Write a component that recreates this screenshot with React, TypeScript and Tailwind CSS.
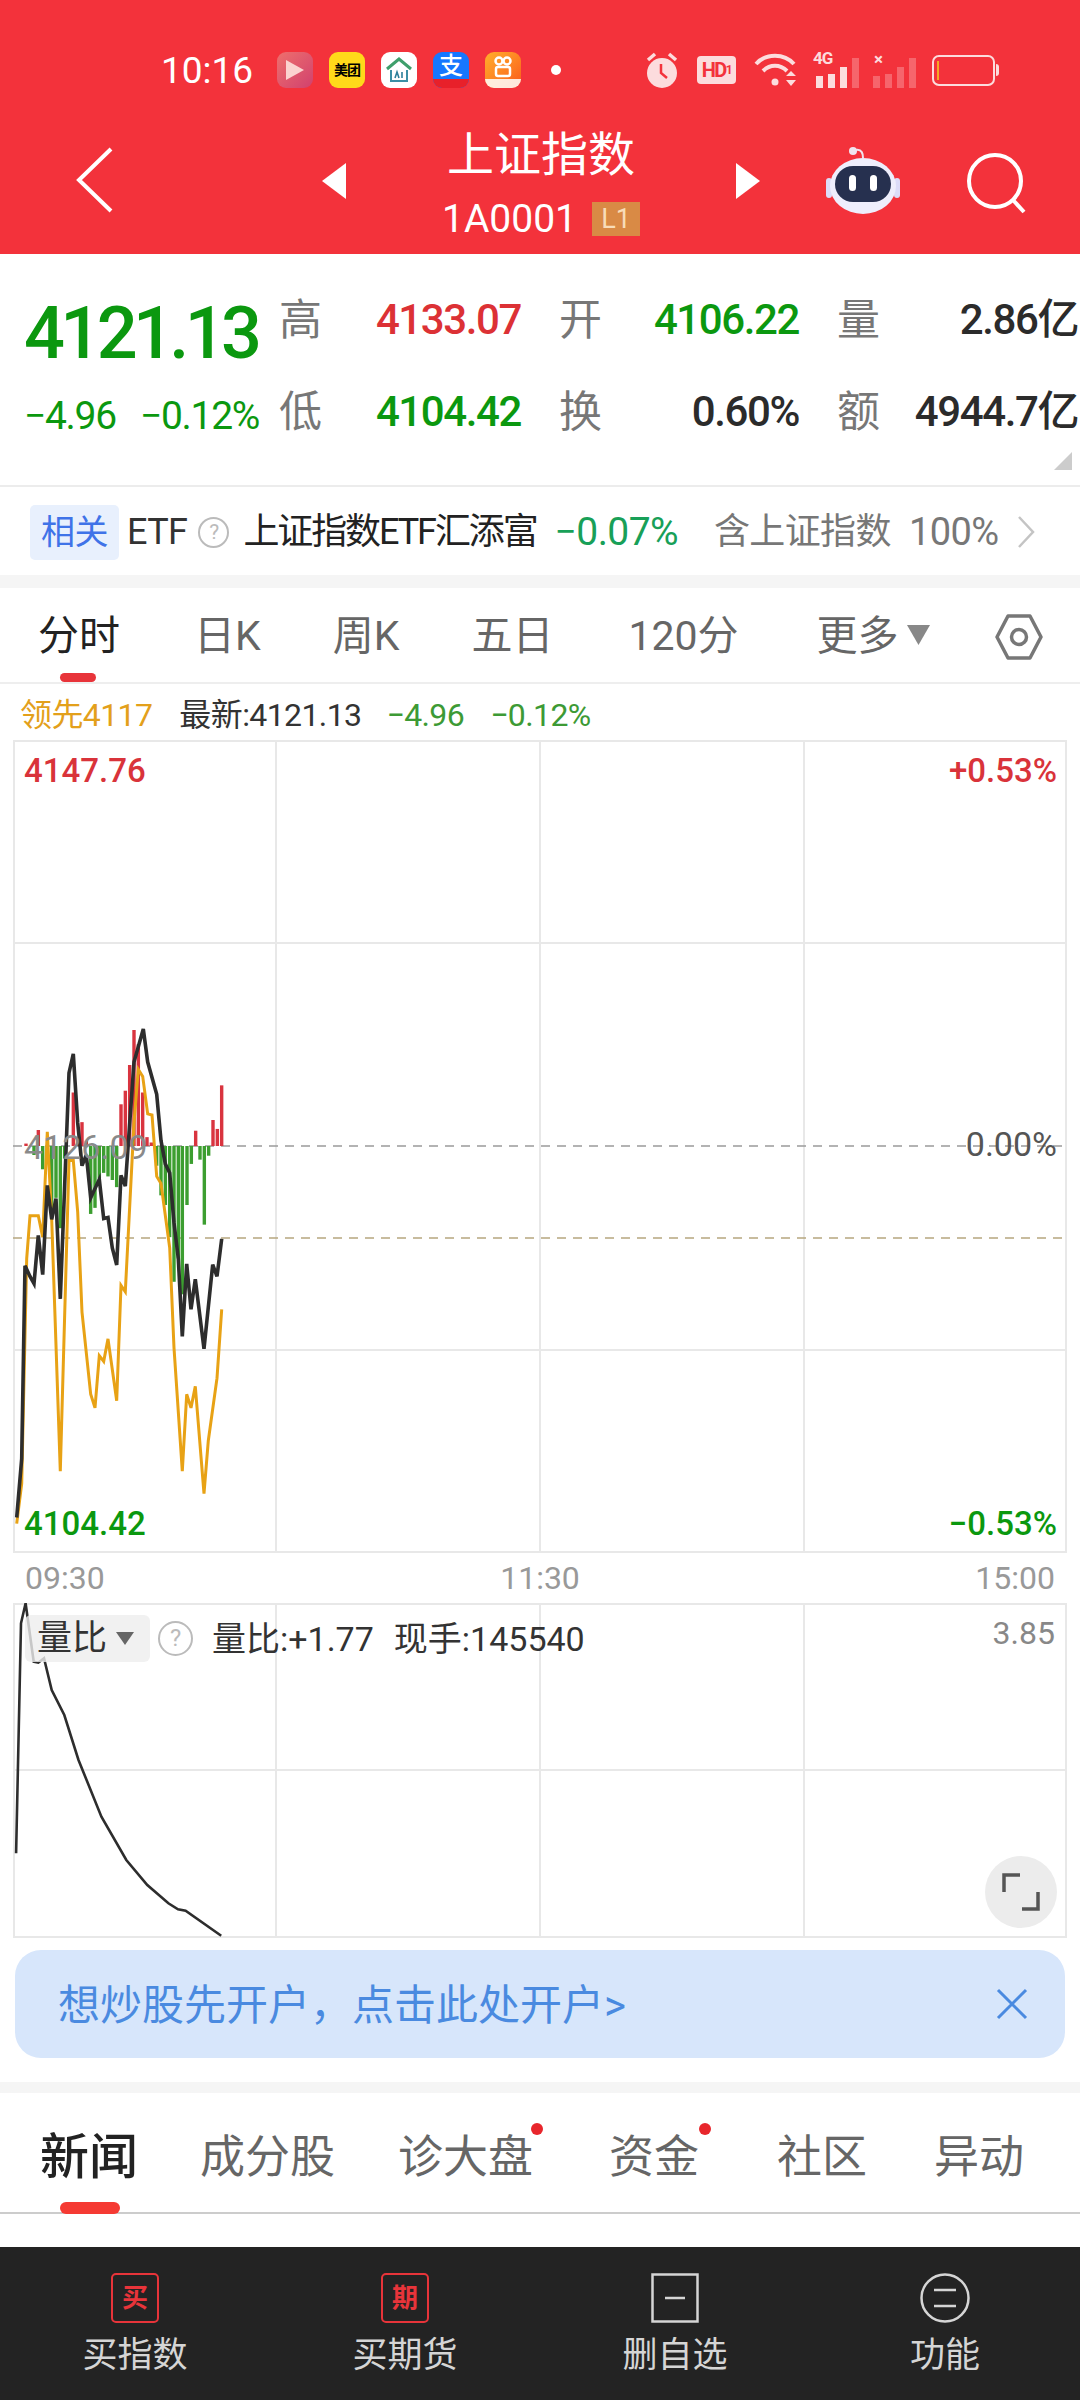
const RED = "#f3323b";

// traced from the reference: x = zx / 3, y = 980 + zy / 2.8
const toPoints = (pts: number[][]) =>
  pts.map(([x, y]) => `${(x / 3).toFixed(1)},${(980 + y / 2.8).toFixed(1)}`).join(" ");

const PRICE = [
  [50, 1505], [65, 1340], [75, 800], [90, 830], [102, 850], [115, 715], [128, 825], [142, 575], [155, 670], [168, 612],
  [181, 893], [207, 260], [220, 207], [233, 400], [246, 520], [259, 490], [272, 610], [298, 558], [311, 668], [324, 665],
  [337, 750], [350, 798], [363, 547], [376, 577], [402, 230], [430, 137], [443, 230], [470, 320], [483, 450], [496, 515],
  [509, 540], [522, 680], [535, 780], [547, 998], [560, 795], [573, 922], [586, 838], [612, 1033], [638, 797], [651, 830],
  [665, 725],
];

const AVG = [
  [50, 1522], [65, 1410], [80, 780], [90, 660], [115, 660], [128, 720], [142, 425], [155, 670], [181, 1375], [207, 505],
  [220, 505], [233, 650], [246, 930], [272, 1160], [285, 1198], [298, 1052], [311, 1068], [324, 1005], [350, 1178], [363, 855],
  [376, 873], [402, 400], [415, 250], [428, 270], [443, 375], [456, 378], [470, 550], [483, 570], [509, 750], [522, 1030],
  [547, 1375], [560, 1160], [573, 1198], [586, 1138], [612, 1438], [625, 1290], [651, 1115], [665, 922],
];

const BARS = [
  [78, 458], [102, 490], [115, 420], [128, 530], [142, 490], [155, 640], [168, 610], [181, 695], [194, 500], [220, 315], [233, 440],
  [246, 398], [259, 450], [272, 655], [285, 638], [298, 555], [311, 540], [324, 550], [337, 560], [350, 580], [363, 348], [376, 310],
  [389, 238], [402, 140], [415, 180], [428, 315], [441, 440], [454, 455], [470, 520], [483, 603], [496, 630], [509, 720], [522, 845],
  [535, 780], [547, 880], [561, 630], [574, 515], [587, 422], [600, 503], [613, 685], [626, 492], [639, 392], [652, 417], [665, 295],
];

const RATIO = [
  [42, 880], [55, 190], [67, 130], [88, 305], [100, 308], [115, 295], [135, 390], [168, 465], [205, 600], [265, 770],
  [330, 900], [385, 975], [440, 1030], [465, 1048], [485, 1052], [578, 1127],
];

function AppIcon({ className, children }: { className: string; children?: React.ReactNode }) {
  return (
    <div className={`flex h-9 w-9 items-center justify-center overflow-hidden rounded-[9px] ${className}`}>{children}</div>
  );
}

function StatusBar() {
  return (
    <div className="flex h-[140px] items-center pl-[161px] text-white">
      <span className="w-[116px] text-[37px] leading-none">10:16</span>
      <div className="flex gap-4">
        <AppIcon className="bg-gradient-to-br from-[#ee6f6c] to-[#d1406e]">
          <svg width="22" height="24" viewBox="0 0 22 24">
            <path d="M2 2 L20 12 L2 22 Z" fill="#fbd3d0" />
          </svg>
        </AppIcon>
        <AppIcon className="bg-[#ffd91a] text-[14px] font-bold tracking-[-1px] text-black">美团</AppIcon>
        <AppIcon className="bg-white">
          <svg width="30" height="30" viewBox="0 0 30 30" fill="none">
            <path d="M3 14 L15 4 L27 14" stroke="#3f9f6b" strokeWidth="3" />
            <path d="M7 15 V26 H23 V15" stroke="#3b8fa5" strokeWidth="2" />
            <path d="M11 23 L13 17 L15 23 M18 17 V23" stroke="#2e7f9a" strokeWidth="1.6" />
          </svg>
        </AppIcon>
        <AppIcon className="relative bg-[#1677ff] text-[24px] font-medium leading-none text-white">
          <span className="-mt-[8px]">支</span>
          <span className="absolute inset-x-0 bottom-0 h-[9px] bg-[#e8202a]" />
        </AppIcon>
        <AppIcon className="relative bg-gradient-to-br from-[#ffae2b] to-[#f9561c]">
          <svg className="-mt-[6px]" width="22" height="24" viewBox="0 0 22 24" fill="none" stroke="white" strokeWidth="2.5">
            <circle cx="7" cy="6" r="3.5" />
            <circle cx="15" cy="6" r="3.5" />
            <rect x="4" y="12" width="14" height="9" rx="2" />
          </svg>
          <span className="absolute inset-x-0 bottom-0 h-[9px] bg-white/85" />
        </AppIcon>
      </div>
      <span className="ml-[30px] h-[10px] w-[10px] rounded-full bg-white" />
      <div className="ml-[84px] flex items-center text-[#fcdcdd]">
        <svg width="34" height="38" viewBox="0 0 34 38" fill="none">
          <circle cx="17" cy="22" r="15" fill="#fcdcdd" />
          <path d="M16 13 V22 L22 27" stroke={RED} strokeWidth="2.5" />
          <path d="M3 9 L10 3 M31 9 L24 3" stroke="#fcdcdd" strokeWidth="3.5" />
        </svg>
        <span className="ml-[18px] flex h-[28px] w-[39px] items-center justify-center rounded-[4px] bg-[#fcdcdd] text-[20px] font-bold leading-none tracking-[-1.5px] text-[#f3323b]">
          HD<span className="text-[12px]">1</span>
        </span>
        <svg className="ml-[18px]" width="46" height="36" viewBox="0 0 46 36" fill="none" stroke="#fcdcdd" strokeWidth="4">
          <path d="M2 12 C12 1 30 1 40 12" />
          <path d="M9 19 C16 12 26 12 33 19" />
          <circle cx="21" cy="30" r="3.5" fill="#fcdcdd" stroke="none" />
          <path d="M32 24 L37 19 L42 24 Z M32 28 L42 28 L37 34 Z" fill="#fcdcdd" stroke="none" />
        </svg>
        <div className="relative ml-[13px] h-[36px] w-[46px]">
          <span className="absolute left-0 top-[-6px] text-[17px] font-bold tracking-[-1px]">4G</span>
          <div className="absolute inset-0 flex items-end gap-[5px]">
            <span className="ml-[3px] h-[12px] w-[7px] bg-[#fcdcdd]" />
            <span className="h-[14px] w-[7px] bg-[#fcdcdd]" />
            <span className="h-[21px] w-[7px] bg-[#fcdcdd]" />
            <span className="h-[30px] w-[7px] bg-white/25" />
          </div>
        </div>
        <div className="relative ml-[14px] h-[36px] w-[44px]">
          <span className="absolute left-[1px] top-[-5px] text-[17px] font-bold leading-[24px]">×</span>
          <div className="absolute inset-0 flex items-end gap-[5px]">
            <span className="h-[12px] w-[7px] bg-white/25" />
            <span className="h-[14px] w-[7px] bg-white/25" />
            <span className="h-[21px] w-[7px] bg-white/25" />
            <span className="h-[30px] w-[7px] bg-white/25" />
          </div>
        </div>
        <div className="ml-[15px] flex items-center">
          <div className="h-[31px] w-[63px] rounded-[7px] border-2 border-[#fcdcdd] pl-[3px] pt-[4px]">
            <div className="h-[19px] w-[2px] bg-[#f6a623]" />
          </div>
          <span className="ml-[1px] h-[12px] w-[3px] rounded-r bg-[#fcdcdd]" />
        </div>
      </div>
    </div>
  );
}

function NavBar() {
  return (
    <div className="flex h-[114px] items-start pl-[76px] text-white">
      <svg className="mt-[7px]" width="38" height="66" viewBox="0 0 38 66" fill="none">
        <path d="M35 2 L3 33 L35 64" stroke="white" strokeWidth="4" />
      </svg>
      <svg className="ml-[208px] mt-[23px]" width="24" height="36" viewBox="0 0 24 36">
        <path d="M24 0 V36 L0 18 Z" fill="white" />
      </svg>
      <div className="-mt-[12px] flex w-[390px] flex-col items-center">
        <span className="text-[47px] leading-[54px]">上证指数</span>
        <div className="mt-[15px] flex items-center gap-[15px]">
          <span className="text-[39px] leading-[44px]">1A0001</span>
          <span className="flex h-[34px] w-[48px] items-center justify-center bg-[#d98a45] text-[27px] text-[#f8dcb8]">L1</span>
        </div>
      </div>
      <svg className="mt-[23px]" width="24" height="36" viewBox="0 0 24 36">
        <path d="M0 0 V36 L24 18 Z" fill="white" />
      </svg>
      <svg className="ml-[66px] mt-[6px]" width="74" height="68" viewBox="0 0 74 68" fill="none">
        <circle cx="27" cy="5" r="4" fill="#f0e4ee" />
        <path d="M30 4 C36 3 37 8 37 12" stroke="#f0e4ee" strokeWidth="2" />
        <rect x="0" y="32" width="6" height="20" rx="3" fill="#dcdcf8" />
        <rect x="68" y="32" width="6" height="20" rx="3" fill="#dcdcf8" />
        <ellipse cx="37" cy="40" rx="33" ry="28" fill="#eeeefc" />
        <rect x="9" y="20" width="56" height="36" rx="18" fill="#26304f" />
        <rect x="23" y="29" width="7" height="16" rx="3.5" fill="white" />
        <rect x="44" y="29" width="7" height="16" rx="3.5" fill="white" />
      </svg>
      <svg className="ml-[66px] mt-[12px]" width="62" height="62" viewBox="0 0 62 62" fill="none" stroke="white" strokeWidth="4">
        <circle cx="29" cy="29" r="26" />
        <path d="M47 48 L58 60" />
      </svg>
    </div>
  );
}

function Stat({ label, value, color }: { label: string; value: string; color: string }) {
  return (
    <div className="flex items-center justify-between">
      <span className="text-[43px] leading-none text-[#777777]">{label}</span>
      <span className={`text-[42px] font-medium leading-none tracking-[-1.4px] ${color}`}>{value}</span>
    </div>
  );
}

function Quote() {
  return (
    <div className="relative flex h-[231px] pl-[24px] pt-[40px]">
      <div className="w-[256px]">
        <div className="mt-[4px] text-[72px] font-medium leading-[72px] tracking-[-4.6px] text-[#0b980f]">4121.13</div>
        <div className="mt-[24px] flex text-[39px] leading-[44px] tracking-[-1.3px] text-[#0b980f]">
          <span className="w-[116px]">−4.96</span>
          <span>−0.12%</span>
        </div>
      </div>
      <div className="-ml-[1px] grid grid-cols-[242px_240px_241px] grid-rows-[92px_92px] gap-x-[38px] [&>*]:h-[52px]">
        <Stat label="高" value="4133.07" color="text-[#dc3135]" />
        <Stat label="开" value="4106.22" color="text-[#0b980f]" />
        <Stat label="量" value="2.86亿" color="text-[#2b2b2b]" />
        <Stat label="低" value="4104.42" color="text-[#0b980f]" />
        <Stat label="换" value="0.60%" color="text-[#2b2b2b]" />
        <Stat label="额" value="4944.7亿" color="text-[#2b2b2b]" />
      </div>
      <svg className="absolute bottom-[15px] right-[8px]" width="18" height="18" viewBox="0 0 18 18">
        <path d="M18 0 V18 H0 Z" fill="#cccccc" />
      </svg>
    </div>
  );
}

function QuestionMark({ size }: { size: number }) {
  return (
    <span
      className="flex items-center justify-center rounded-full border-2 border-[#bbbbbb] text-[#bbbbbb]"
      style={{ width: size, height: size, fontSize: size * 0.68 }}
    >
      ?
    </span>
  );
}

function RelatedRow() {
  return (
    <div className="flex h-[90px] items-center border-t-2 border-[#ececec] pl-[30px] pt-[2px] text-[36px] leading-none tracking-[-0.6px]">
      <span className="flex h-[55px] w-[89px] items-center justify-center rounded-[5px] bg-[#e8f0fd] text-[34px] text-[#3f73e8]">相关</span>
      <span className="ml-[8px] text-[#333333]">ETF</span>
      <span className="ml-[11px]">
        <QuestionMark size={31} />
      </span>
      <span className="ml-[14px] text-[#222222] tracking-[-2.1px]">上证指数ETF汇添富</span>
      <span className="ml-[18px] text-[39px] text-[#18a058]">−0.07%</span>
      <span className="ml-[36px] text-[#777777]">含上证指数</span>
      <span className="ml-[18px] text-[38px] text-[#777777]">100%</span>
      <svg className="ml-[19px]" width="18" height="34" viewBox="0 0 18 34" fill="none">
        <path d="M2 2 L16 17 L2 32" stroke="#c4c4c4" strokeWidth="2.5" />
      </svg>
    </div>
  );
}

function PeriodTabs() {
  return (
    <div className="relative flex h-[96px] items-center border-b-2 border-[#eeeeee] pt-[3px] text-[41px] leading-none text-[#666666]">
      <span className="ml-[38px] text-[#222222]">分时</span>
      <span className="ml-[74px]">日K</span>
      <span className="ml-[72px]">周K</span>
      <span className="ml-[72px]">五日</span>
      <span className="ml-[75px]">120分</span>
      <span className="ml-[78px]">更多</span>
      <svg className="ml-[8px] mt-[-4px]" width="23" height="20" viewBox="0 0 23 20">
        <path d="M0 0 H23 L11.5 20 Z" fill="#888888" />
      </svg>
      <svg className="ml-[65px]" width="48" height="48" viewBox="0 0 48 48" fill="none" stroke="#777777" strokeWidth="3.5">
        <path d="M13 3 H35 L46 24 L35 45 H13 L2 24 Z" strokeLinejoin="round" />
        <circle cx="24" cy="24" r="7.5" />
      </svg>
      <span className="absolute bottom-0 left-[60px] h-[9px] w-[36px] rounded-full bg-[#e8343a]" />
    </div>
  );
}

function InfoRow() {
  return (
    <div className="flex h-[56px] items-center pl-[20px] pt-[5px] text-[32px] leading-none tracking-[-0.6px]">
      <span className="text-[#e3a01b]">领先4117</span>
      <span className="ml-[27px] text-[#333333]">最新:4121.13</span>
      <span className="ml-[25px] text-[#3d9a35]">−4.96</span>
      <span className="ml-[26px] text-[#3d9a35]">−0.12%</span>
    </div>
  );
}

function PriceChart() {
  return (
    <div className="relative mx-[13px] h-[813px] text-[33px] font-medium leading-none">
      <svg className="block h-full w-full" viewBox="13 740 1054 813" fill="none">
        <g stroke="#e8e8e8" strokeWidth="2">
          <rect x="14" y="741" width="1052" height="811" />
          <path d="M276 740 V1552 M540 740 V1552 M804 740 V1552 M13 943 H1067 M13 1350 H1067" />
        </g>
        <path d="M13 1146 H1067" stroke="#9a9a9a" strokeWidth="1.5" strokeDasharray="9 7" />
        <path d="M13 1238 H1067" stroke="#b7a77f" strokeWidth="1.5" strokeDasharray="9 7" />
        {BARS.map(([x, y]) => {
          const top = 980 + y / 2.8;
          return (
            <rect
              key={x}
              x={x / 3 - 1.7}
              y={Math.min(top, 1146)}
              width="3.4"
              height={Math.abs(top - 1146)}
              fill={top < 1146 ? "#d9343f" : "#3c9e30"}
            />
          );
        })}
        <polyline points={toPoints(AVG)} stroke="#e8a215" strokeWidth="3" />
        <polyline points={toPoints(PRICE)} stroke="#2d2d2d" strokeWidth="3.6" />
      </svg>
      <span className="absolute left-[11px] top-[14px] text-[#d9333a]">4147.76</span>
      <span className="absolute right-[10px] top-[14px] text-[#d9333a]">+0.53%</span>
      <span className="absolute left-[11px] top-[390px] text-[34px] font-normal text-[#8a8a8a]">4126.09</span>
      <span className="absolute right-[10px] top-[387px] text-[34px] font-normal text-[#555555]">0.00%</span>
      <span className="absolute bottom-[13px] left-[11px] text-[#0b980f]">4104.42</span>
      <span className="absolute bottom-[13px] right-[10px] text-[#0b980f]">−0.53%</span>
    </div>
  );
}

function TimeAxis() {
  return (
    <div className="flex h-[50px] items-center justify-between px-[25px] text-[32px] leading-none text-[#999999]">
      <span>09:30</span>
      <span>11:30</span>
      <span>15:00</span>
    </div>
  );
}

function RatioChart() {
  const points = RATIO.map(([x, y]) => `${(x / 2.613).toFixed(1)},${(1560 + y / 3).toFixed(1)}`).join(" ");
  return (
    <div className="relative mx-[13px] h-[335px]">
      <svg className="block h-full w-full" viewBox="13 1603 1054 335" fill="none">
        <g stroke="#e8e8e8" strokeWidth="2">
          <rect x="14" y="1604" width="1052" height="333" />
          <path d="M276 1603 V1937 M540 1603 V1937 M804 1603 V1937 M13 1770 H1067" />
        </g>
        <polyline points={points} stroke="#2d2d2d" strokeWidth="2.6" />
      </svg>
      <div className="absolute left-[12px] top-[12px] flex items-center text-[34px] leading-none text-[#333333]">
        <span className="flex h-[47px] w-[125px] items-center rounded-[6px] bg-[#eeeeee]/80 pl-[12px] text-[35px]">
          量比
          <svg className="ml-[9px]" width="18" height="13" viewBox="0 0 18 13">
            <path d="M0 0 H18 L9 13 Z" fill="#666666" />
          </svg>
        </span>
        <span className="ml-[8px]">
          <QuestionMark size={35} />
        </span>
        <span className="ml-[19px]">量比:+1.77</span>
        <span className="ml-[20px]">现手:145540</span>
      </div>
      <span className="absolute right-[12px] top-[14px] text-[32px] leading-none text-[#888888]">3.85</span>
      <div className="absolute bottom-[10px] right-[10px] flex h-[72px] w-[72px] items-center justify-center rounded-full bg-[#ececec]">
        <svg width="38" height="38" viewBox="0 0 38 38" fill="none" stroke="#555555" strokeWidth="3.5">
          <path d="M2 19 V2 H18 M36 19 V36 H20" />
        </svg>
      </div>
    </div>
  );
}

function OpenAccountBanner() {
  return (
    <div className="mx-[15px] mt-[12px] flex h-[108px] items-center justify-between rounded-[26px] bg-[#d7e6fb] pl-[43px] pr-[37px] text-[#4a8ae0]">
      <span className="pt-[3px] text-[42px] leading-none">想炒股先开户，点击此处开户&gt;</span>
      <svg width="32" height="32" viewBox="0 0 32 32" fill="none" stroke="#4a8ae0" strokeWidth="3">
        <path d="M2 2 L30 30 M30 2 L2 30" />
      </svg>
    </div>
  );
}

function NewsTabs() {
  return (
    <div className="relative flex h-[121px] items-center border-b-2 border-[#cccccc] pt-[10px] text-[45px] leading-none text-[#666666]">
      <span className="ml-[40px] text-[49px] font-medium text-[#222222]">新闻</span>
      <span className="ml-[62px]">成分股</span>
      <span className="relative ml-[63px]">
        诊大盘
        <i className="absolute -right-[10px] -top-[12px] h-[12px] w-[12px] rounded-full bg-[#e8262c]" />
      </span>
      <span className="relative ml-[76px]">
        资金
        <i className="absolute -right-[12px] -top-[12px] h-[12px] w-[12px] rounded-full bg-[#e8262c]" />
      </span>
      <span className="ml-[78px]">社区</span>
      <span className="ml-[67px]">异动</span>
      <span className="absolute -bottom-[2px] left-[60px] h-[12px] w-[60px] rounded-full bg-[#f53a33]" />
    </div>
  );
}

function ToolButton({ label, children }: { label: string; children: React.ReactNode }) {
  return (
    <div className="flex w-[270px] flex-col items-center">
      <div className="flex h-[50px] items-center justify-center">{children}</div>
      <span className="mt-[15px] text-[35px] leading-none text-[#d5d5d5]">{label}</span>
    </div>
  );
}

function BottomBar() {
  return (
    <div className="flex h-[153px] bg-[#232323] pt-[26px]">
      <ToolButton label="买指数">
        <span className="flex h-[50px] w-[48px] items-center justify-center rounded-[5px] border-2 border-[#e8343a] text-[26px] font-bold text-[#e8343a]">买</span>
      </ToolButton>
      <ToolButton label="买期货">
        <span className="flex h-[50px] w-[48px] items-center justify-center rounded-[5px] border-2 border-[#e8343a] text-[26px] font-bold text-[#e8343a]">期</span>
      </ToolButton>
      <ToolButton label="删自选">
        <svg width="48" height="50" viewBox="0 0 48 50" fill="none" stroke="#d5d5d5" strokeWidth="2.5">
          <rect x="1.5" y="1.5" width="45" height="47" />
          <path d="M14 25 H34" />
        </svg>
      </ToolButton>
      <ToolButton label="功能">
        <svg width="50" height="50" viewBox="0 0 50 50" fill="none" stroke="#d5d5d5" strokeWidth="2.5">
          <circle cx="25" cy="25" r="23.5" />
          <path d="M14 17 H36 M14 33 H36" />
        </svg>
      </ToolButton>
    </div>
  );
}

export default function App() {
  return (
    <div className="flex h-[2400px] w-[1080px] flex-col bg-white [font-family:Roboto,'Noto_Sans_CJK_SC',sans-serif]">
      <header className="bg-[#f3323b]">
        <StatusBar />
        <NavBar />
      </header>
      <Quote />
      <RelatedRow />
      <div className="h-[13px] bg-[#f5f5f5]" />
      <PeriodTabs />
      <InfoRow />
      <PriceChart />
      <TimeAxis />
      <RatioChart />
      <OpenAccountBanner />
      <div className="mt-[24px] h-[11px] bg-[#f5f5f5]" />
      <NewsTabs />
      <div className="flex-1" />
      <BottomBar />
    </div>
  );
}
